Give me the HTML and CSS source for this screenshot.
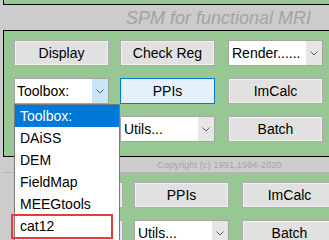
FILE: index.html
```html
<!DOCTYPE html>
<html>

<head>
  <title>SPM menu</title>
  <link rel="stylesheet" href="styles.css">
</head>

<body>
  <!-- window behind, only its lower rows show -->
  <div class="window window-back">
    <div class="panel">
      <div class="grid">
        <div class="spacer"></div>
        <div class="spacer"></div>
        <div class="spacer"></div>
        <div class="btn"></div>
        <button class="btn">PPIs</button>
        <button class="btn">ImCalc</button>
        <div class="btn"></div>
        <div class="select"><span>Utils...</span><span class="arrow"><svg width="8" height="5" viewBox="0 0 8 5"><polyline points="0.5,0.5 4,4 7.5,0.5" /></svg></span></div>
        <button class="btn">Batch</button>
      </div>
    </div>
  </div>

  <!-- window in front -->
  <div class="window window-front">
    <div class="prev-panel"></div>
    <div class="title">SPM for functional MRI</div>
    <div class="panel">
      <div class="grid">
        <button class="btn">Display</button>
        <button class="btn">Check Reg</button>
        <div class="select"><span>Render......</span><span class="arrow"><svg width="8" height="5" viewBox="0 0 8 5"><polyline points="0.5,0.5 4,4 7.5,0.5" /></svg></span></div>
        <div class="select open"><span>Toolbox:</span><span class="arrow"><svg width="8" height="5" viewBox="0 0 8 5"><polyline points="0.5,0.5 4,4 7.5,0.5" /></svg></span></div>
        <button class="btn focus">PPIs</button>
        <button class="btn">ImCalc</button>
        <div class="btn"></div>
        <div class="select"><span>Utils...</span><span class="arrow"><svg width="8" height="5" viewBox="0 0 8 5"><polyline points="0.5,0.5 4,4 7.5,0.5" /></svg></span></div>
        <button class="btn">Batch</button>
      </div>
    </div>
    <div class="copyright">Copyright (c) 1991,1994-2020</div>
  </div>

  <!-- open dropdown list -->
  <ul class="dropdown">
    <li class="selected">Toolbox:</li>
    <li>DAiSS</li>
    <li>DEM</li>
    <li>FieldMap</li>
    <li>MEEGtools</li>
    <li>cat12</li>
  </ul>

  <div class="mark"></div>
</body>

</html>
```

FILE: styles.css
```css
body {
  margin: 0;
  width: 329px;
  height: 240px;
  overflow: hidden;
  position: relative;
  background-color: #cccccc;
  font-family: "Liberation Sans", Arial, sans-serif;
}

.window {
  position: absolute;
  width: 360px;
  background-color: #cccccc;
}

.window-front {
  left: 0;
  top: 0;
  padding-left: 3px;
  z-index: 2;
}

.window-back {
  left: 17px;
  top: 134px;
  z-index: 1;
}

.prev-panel {
  height: 4px;
  background-color: #97c793;
  border-left: 1px solid #000;
  border-bottom: 1px solid #000;
}

.title {
  height: 25px;
  box-sizing: border-box;
  padding: 3px 0 0 123px;
  font-size: 18px;
  font-style: italic;
  color: #a3a3a3;
  line-height: 21px;
}

.panel {
  background-color: #97c793;
  border-top: 1px solid #000;
  border-left: 1px solid #000;
  border-bottom: 1px solid #000;
  padding: 9px 0 14px 10px;
}

.grid {
  display: grid;
  grid-template-columns: 106px 108px 95px;
  grid-auto-rows: 26px;
  row-gap: 12px;
}

.btn {
  width: 95px;
  height: 26px;
  box-sizing: border-box;
  margin: 0;
  padding: 0;
  background-color: #e1e1e1;
  border: 1px solid #adadad;
  box-shadow: inset 0 0 0 1px #f2f2f2;
  font-family: "Liberation Sans", Arial, sans-serif;
  font-size: 14px;
  color: #000;
}

.btn.focus {
  background-color: #e5f1fb;
  border-color: #0078d7;
  box-shadow: none;
}

.select {
  width: 95px;
  height: 26px;
  box-sizing: border-box;
  display: flex;
  align-items: stretch;
  background-color: #fff;
  border: 1px solid #a5a5a5;
  font-size: 14px;
  color: #000;
}

.select span:first-child {
  flex: 1;
  padding-left: 3px;
  line-height: 24px;
  white-space: nowrap;
  overflow: hidden;
}

.select .arrow {
  width: 16px;
  display: flex;
  align-items: center;
  justify-content: center;
  background-color: #e6e6e6;
}

.select.open span:first-child {
  padding-left: 2px;
}

.select.open .arrow {
  background-color: #cce4f7;
}

.arrow polyline {
  fill: none;
  stroke: #606060;
  stroke-width: 1;
}

.copyright {
  height: 16px;
  box-sizing: border-box;
  padding-left: 154px;
  font-size: 9.4px;
  line-height: 16px;
  color: #a6a6a6;
  border-bottom: 1px solid #b8b8b8;
}

.dropdown {
  position: absolute;
  left: 14px;
  top: 104px;
  width: 104px;
  height: 150px;
  margin: 0;
  padding: 0;
  list-style: none;
  background-color: #fff;
  border: 1px solid #7a7a7a;
  z-index: 3;
  font-size: 14px;
  color: #000;
}

.dropdown li {
  height: 22px;
  line-height: 22px;
  padding-left: 5px;
}

.dropdown li.selected {
  background-color: #0078d7;
  color: #fff;
}

.mark {
  position: absolute;
  left: 11px;
  top: 214px;
  width: 98px;
  height: 21px;
  border: 2px solid #e83a3a;
  z-index: 4;
}
```
